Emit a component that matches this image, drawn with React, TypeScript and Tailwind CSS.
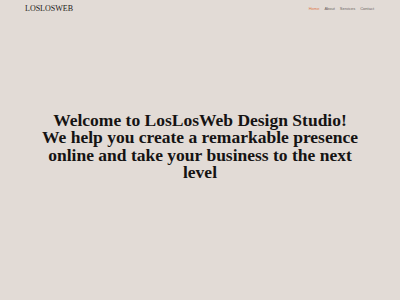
export default function App() {
  return (
    <div className="w-[400px] h-[300px] bg-[#e2dbd6] flex flex-col overflow-hidden">
      {/* Header */}
      <header className="flex items-center justify-between h-[17px] pl-[25px] pr-[26px]">
        <span className="font-['Liberation_Serif',serif] text-[8px] text-[#1c1a19] tracking-[0px]">
          LOSLOSWEB
        </span>
        <nav className="flex gap-[5px] font-['Liberation_Sans',sans-serif] text-[4px] text-[#6b6562]">
          <span className="text-[#e07a4a]">Home</span>
          <span>About</span>
          <span>Services</span>
          <span>Contact</span>
        </nav>
      </header>

      {/* Hero */}
      <main className="flex-1 flex items-center justify-center pb-[24px]">
        <h1 className="font-['Liberation_Serif',serif] font-bold text-[17.5px] leading-[17.5px] tracking-[0px] text-center text-[#151313] w-[322px]">
          <span className="block">Welcome to LosLosWeb Design Studio!</span>
          <span className="block">
            We help you create a remarkable presence online and take your business to the next level
          </span>
        </h1>
      </main>
    </div>
  );
}
